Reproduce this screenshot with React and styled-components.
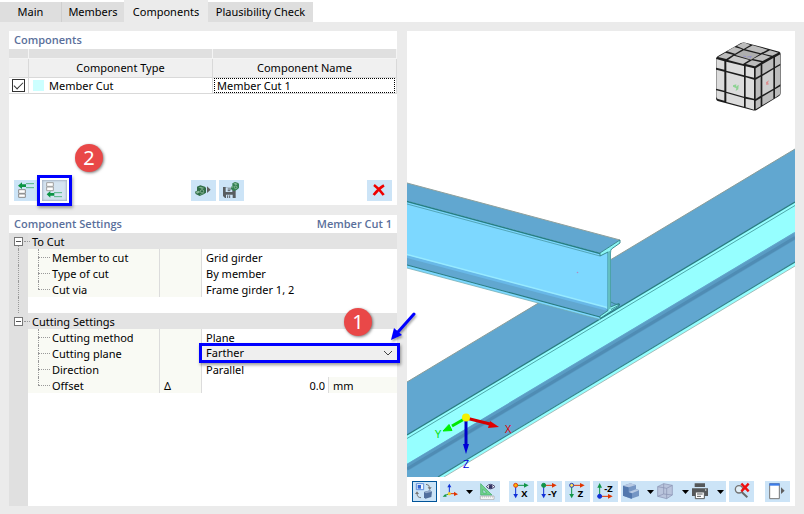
import React, { useState } from 'react';
import styled, { createGlobalStyle, css } from 'styled-components';

function App() {
    return (
        <>
            <GlobalStyle />
            <AppStyled>
                <TabBar />
                <Workspace>
                    <SideColumn>
                        <ComponentsPanel />
                        <SettingsPanel />
                    </SideColumn>
                    <ViewPanel />
                </Workspace>
            </AppStyled>
        </>
    );
}

function TabBar() {
    const [active, setActive] = useState('Components');
    const tabs = [
        { name: 'Main', width: 62 },
        { name: 'Members', width: 62 },
        { name: 'Components', width: 84 },
        { name: 'Plausibility Check', width: 105 },
    ];
    return (
        <Tabs role="tablist">
            {tabs.map((tab) => (
                <Tab
                    key={tab.name}
                    type="button"
                    role="tab"
                    $width={tab.width}
                    $active={tab.name === active}
                    aria-selected={tab.name === active}
                    onClick={() => setActive(tab.name)}
                >
                    {tab.name}
                </Tab>
            ))}
        </Tabs>
    );
}

function ComponentsPanel() {
    const [enabled, setEnabled] = useState(true);
    const [name, setName] = useState('Member Cut 1');
    return (
        <Panel $height={174}>
            <PanelTitle>Components</PanelTitle>
            <ComponentTable>
                <colgroup>
                    <col style={{ width: 20 }} />
                    <col />
                    <col />
                </colgroup>
                <thead>
                    <BandRow><td /><td /><td /></BandRow>
                    <HeadRow><th aria-label="Active" /><th>Component Type</th><th>Component Name</th></HeadRow>
                </thead>
                <tbody>
                    <BodyRow>
                        <td>
                            <CheckBox
                                type="checkbox"
                                aria-label="Member Cut active"
                                checked={enabled}
                                onChange={(e) => setEnabled(e.target.checked)}
                            />
                        </td>
                        <td><TypeCell><Swatch />Member Cut</TypeCell></td>
                        <td>
                            <NameInput aria-label="Component name" value={name} onChange={(e) => setName(e.target.value)} />
                        </td>
                    </BodyRow>
                </tbody>
            </ComponentTable>
            <ListTools>
                <ToolButton aria-label="Insert before"><InsertBeforeIcon /></ToolButton>
                <Marked>
                    <ToolButton $pressed aria-label="Insert after"><InsertAfterIcon /></ToolButton>
                    <MarkFrame />
                    <Badge $left={33} $top={-36}>2</Badge>
                </Marked>
                <Spacer />
                <ToolButton aria-label="Load component"><LibraryIcon /></ToolButton>
                <ToolButton aria-label="Save component"><SaveIcon /></ToolButton>
                <Spacer />
                <ToolButton aria-label="Delete"><DeleteIcon /></ToolButton>
            </ListTools>
        </Panel>
    );
}

function SettingsPanel() {
    const [plane, setPlane] = useState('Farther');
    const [offset, setOffset] = useState('0.0');
    return (
        <Panel $grow>
            <PanelTitle><span>Component Settings</span><span>Member Cut 1</span></PanelTitle>
            <SettingsBody>
                <SettingsTable>
                    <colgroup>
                        <col style={{ width: 19 }} />
                        <col style={{ width: 132 }} />
                        <col style={{ width: 42 }} />
                        <col />
                        <col style={{ width: 69 }} />
                    </colgroup>
                    <tbody>
                        <GroupRow title="To Cut" linked />
                        <Setting label="Member to cut" linked>Grid girder</Setting>
                        <Setting label="Type of cut" linked>By member</Setting>
                        <Setting label="Cut via" linked last>Frame girder 1, 2</Setting>
                        <tr><Gutter $linked /><td colSpan={4} /></tr>
                        <GroupRow title="Cutting Settings" />
                        <Setting label="Cutting method">Plane</Setting>
                        <Setting label="Cutting plane" htmlFor="plane">
                            <PlaneField>
                                <PlaneSelect id="plane" value={plane} onChange={(e) => setPlane(e.target.value)}>
                                    <option>Farther</option>
                                    <option>Closer</option>
                                </PlaneSelect>
                                <Chevron viewBox="0 0 10 6"><path d="M1 1l4 4 4-4" /></Chevron>
                                <Badge $left={142} $top={-37}>1</Badge>
                                <Pointer viewBox="0 0 30 32">
                                    <path d="M25 3L9 21" stroke="#0000ff" strokeWidth="3" strokeLinecap="round" />
                                    <path d="M2 29l3-12 8 7z" fill="#0000ff" />
                                </Pointer>
                            </PlaneField>
                        </Setting>
                        <Setting label="Direction">Parallel</Setting>
                        <tr>
                            <Gutter />
                            <NameCell $last><label htmlFor="offset">Offset</label></NameCell>
                            <SymbolCell>Δ</SymbolCell>
                            <ValueCell>
                                <OffsetInput id="offset" value={offset} onChange={(e) => setOffset(e.target.value)} />
                            </ValueCell>
                            <UnitCell>mm</UnitCell>
                        </tr>
                    </tbody>
                </SettingsTable>
            </SettingsBody>
        </Panel>
    );
}

function GroupRow({ title, linked }) {
    return (
        <tr>
            <Gutter $group $linked={linked}><Toggle type="button" aria-label={`Collapse ${title}`} /></Gutter>
            <GroupCell colSpan={4}>{title}</GroupCell>
        </tr>
    );
}

function Setting({ label, htmlFor, linked, last, children }) {
    return (
        <tr>
            <Gutter $linked={linked} />
            <NameCell $last={last}>{htmlFor ? <label htmlFor={htmlFor}>{label}</label> : label}</NameCell>
            <SymbolCell />
            <ValueCell colSpan={2}>{children}</ValueCell>
        </tr>
    );
}

function ViewPanel() {
    return (
        <View>
            <Scene />
            <NavCube />
            <ViewTools>
                <ToolButton $active aria-label="Switch view"><SwitchIcon /></ToolButton>
                <ToolGroup>
                    <SplitButton aria-label="Axes"><AxesIcon /><Caret /></SplitButton>
                    <ToolButton aria-label="Visibility"><RulerIcon /></ToolButton>
                </ToolGroup>
                <Divider />
                <ToolButton aria-label="View in X"><DirectionIcon dot="#ffb400" ring="#e03a1c" right="#119547" down="#1030d8" label="X" /></ToolButton>
                <ToolButton aria-label="View against Y"><DirectionIcon dot="#119547" ring="#119547" right="#e03400" down="#1030d8" label="-Y" /></ToolButton>
                <ToolButton aria-label="View in Z"><DirectionIcon dot="#ffe45c" ring="#2340b8" right="#e03400" down="#119547" label="Z" /></ToolButton>
                <ToolButton aria-label="View against Z"><DirectionIcon up dot="#1030d8" ring="#1030d8" right="#e03400" down="#119547" label="-Z" /></ToolButton>
                <ToolGroup>
                    <SplitButton aria-label="Solid display"><SolidIcon /><Caret /></SplitButton>
                    <SplitButton aria-label="Wireframe display"><WireIcon /><Caret /></SplitButton>
                    <SplitButton aria-label="Print"><PrintIcon /><Caret /></SplitButton>
                </ToolGroup>
                <ToolButton aria-label="Cancel zoom"><ZoomOffIcon /></ToolButton>
                <Spacer />
                <ToolButton aria-label="Show sidebar"><SidebarIcon /></ToolButton>
            </ViewTools>
        </View>
    );
}

function Scene() {
    return (
        <SceneSvg viewBox="407 31 388 446" preserveAspectRatio="xMidYMid slice" role="img" aria-label="Steel joint model">
            {/* frame girder */}
            <path d="M407 382L795 149V202L407 435z" fill="#61a7d0" />
            <path d="M407 382L795 149" stroke="#8a9c98" strokeWidth="1" />
            <path d="M407 435L795 202V233L407 465z" fill="#96ffff" />
            <path d="M407 464L795 232V262L438 477H407z" fill="#61a7d0" />
            <path d="M407 465.500L795 233.500" stroke="#63a6cc" strokeWidth="3" />
            <path d="M407 468L795 236.500" stroke="#5a9cc4" strokeWidth="6" />
            <path d="M407 469L795 237.500" stroke="#4f8cb4" strokeWidth="3" />
            <path d="M438 477L795 262V266L444 477z" fill="#96ffff" />
            <path d="M438 477L795 262" stroke="#307f86" strokeWidth="1.200" />
            <path d="M444 477L795 266" stroke="#9aaca8" strokeWidth=".8" />
            <path d="M407 435L795 202" stroke="#287b80" strokeWidth="1.300" />
            <path d="M407 438.500L795 205.500" stroke="#3e9296" strokeWidth=".8" />

            {/* grid girder */}
            <path d="M407 201L600 253 610 250V309L600 317 407 265z" fill="#7dd8ff" />
            <path d="M407 183L620 240 600 253 407 201z" fill="#61a7d0" />
            <path d="M407 183L620 240" stroke="#90a09c" strokeWidth="1" />
            <path d="M407 257L608 309.500 619 304 600 317 407 265z" fill="#61a7d0" />
            <path d="M407 256.500L606 309" stroke="#68b8e8" strokeWidth="3" />
            <path d="M407 254.500L607 307.500" stroke="#97eaff" strokeWidth="1.500" />
            <path d="M407 265L600 317V319.500L407 268z" fill="#7dd8ff" />
            <path d="M407 265L600 317" stroke="#287b80" strokeWidth="1.200" />
            <path d="M407 268L600 319.500" stroke="#6fa8ac" strokeWidth=".7" />
            <path d="M407 201.500L600 253.500" stroke="#267e84" strokeWidth="1.400" />
            <path d="M407 204L600 256" stroke="#4898a6" strokeWidth=".8" />
            <path d="M600 253L620 240V243L611.500 249Q610.500 250 610.500 253V307L619 303.500V306L600 318.500V316L608 310.500V252L600 256z" fill="#8cf6f4" stroke="#2c7f84" strokeWidth=".9" />
            <path d="M609.500 251V309" stroke="#65bfc0" strokeWidth="2" />
            <path d="M611 302l4 2 5 .5-9 5" fill="none" stroke="#2c7f84" strokeWidth=".8" />
            <circle cx="577.500" cy="272.500" r=".8" fill="#b28cc2" />

            {/* global axes */}
            <g strokeWidth="3" fill="none">
                <path d="M466 418l24 6" stroke="#d40000" />
                <path d="M466 418l-14 8" stroke="#00e800" />
                <path d="M466 420v25" stroke="#0000c8" />
            </g>
            <path d="M499 427l-9-6-2 7z" fill="#e00000" />
            <path d="M443 431l9-.5-3-6z" fill="#00f000" stroke="#00f000" />
            <path d="M466 454l-3-10h6z" fill="#0000d8" />
            <circle cx="466" cy="417.500" r="4" fill="#f4f000" />
            <AxisLabel x="508" y="433" fill="#e00000">X</AxisLabel>
            <AxisLabel x="438" y="438" fill="#00dc00">Y</AxisLabel>
            <AxisLabel x="466" y="468" fill="#0000e0">Z</AxisLabel>
        </SceneSvg>
    );
}

function NavCube() {
    return (
        <CubeSvg viewBox="44 34 204 213" aria-label="View cube">
            <path d="M55 80L125 40Q131 37 138 39L240 66Q244 68 244 74V190Q244 197 238 200L173 240Q167 244 160 242L55 214Q50 212 50 206V88Q50 83 55 80z" fill="#1c1c1c" />
            <g fill="#bdbdbd">
                <path d="M112 49l17-9q5-2 10 0l14 6-20 12z" />
                <path d="M160 47l45 13-21 11-46-12z" />
                <path d="M212 62l25 7-18 9-27-6z" />
                <path d="M83 65l22-13 24 7-22 13z" />
                <path d="M133 62l48 12-26 16-47-14z" fill="#aeaeae" />
                <path d="M188 74l26 7-24 13-29-6z" />
                <path d="M56 82l22-13 23 6-20 13z" />
                <path d="M104 78l46 13-19 12-45-12z" fill="#c9c9c9" />
                <path d="M158 92l28 6-19 12-28-7z" />
            </g>
            <g fill="#dcdcdc">
                <path d="M51 88l24 7v25l-24-6z" />
                <path d="M81 96l53 13v28l-53-14z" />
                <path d="M139 110l25 6v28l-25-6z" />
                <path d="M51 120l24 6v57l-24-6z" />
                <path d="M81 128l53 14v59l-53-15z" />
                <path d="M139 143l25 7v57l-25-6z" />
                <path d="M51 182l24 6v25l-19-5q-5-2-5-7z" />
                <path d="M81 190l53 15v26l-53-14z" />
                <path d="M139 207l25 5v28l-25-7z" />
            </g>
            <g fill="#bcbcbc">
                <path d="M169 116l15-9v29l-15 8z" />
                <path d="M189 104l33-19v29l-33 20z" />
                <path d="M227 83l16-9v28l-16 9z" />
                <path d="M169 150l15-9v57l-15 10z" />
                <path d="M189 139l33-20v58l-33 19z" fill="#cecece" />
                <path d="M227 116l16-9v57l-16 10z" />
                <path d="M169 214l15-9v25l-15 9z" />
                <path d="M189 201l33-19v25l-33 20z" />
                <path d="M227 179l16-9v20q0 4-4 6l-12 8z" />
            </g>
            <path d="M101 167l10-3-1 7 8-6-1 14-8 5 2-8-10-5z" fill="#8fd394" />
            <path d="M200 158l9-6-3 7 3 5-8 2z" fill="#dc8d8d" />
            <path d="M132 79l8 2m4 1l12-2-4 6" fill="none" stroke="#9693c9" strokeWidth="3" />
        </CubeSvg>
    );
}

const Glyph = ({ children }) => <IconSvg viewBox="0 0 75 63" aria-hidden="true">{children}</IconSvg>;

const InsertBeforeIcon = () => (
    <Glyph>
        <path d="M12 17l12-10v6h12v8H24v6z" fill="#0a9444" />
        <path d="M36 11h24M36 23h24" stroke="#53b484" strokeWidth="3" />
        <path d="M14 29h20v11H14zM14 42h20v10H14z" fill="#fff" stroke="#8b8b8b" strokeWidth="3" />
    </Glyph>
);

const InsertAfterIcon = () => (
    <Glyph>
        <path d="M14 8h20v11H14zM14 21h20v11H14z" fill="#fff" stroke="#a0a0a0" strokeWidth="3" />
        <path d="M14 43l11-10v6h12v8H25v6z" fill="#0a9444" />
        <path d="M36 38h24M36 50h24" stroke="#53b484" strokeWidth="3" />
    </Glyph>
);

const LibraryIcon = () => (
    <Glyph>
        <path d="M18 20l10-4 14 4 3 4v14l-7 5-12 5-12-6-2-7 6-3z" fill="#2f6d47" />
        <path d="M22 22l8-2 10 4-7 3z" fill="#7db18e" />
        <path d="M14 35l10-3 3 5-9 4z" fill="#8dbb9c" />
        <circle cx="33" cy="34" r="5" fill="#2f6d47" stroke="#a9cdb4" strokeWidth="2" />
        <path d="M27 44l12-5" stroke="#74a985" strokeWidth="2" />
        <path d="M48 19l11 10-11 10z" fill="#606060" />
    </Glyph>
);

const SaveIcon = () => (
    <Glyph>
        <path d="M12 21h30l8 8v25H18l-6-6z" fill="#585d60" />
        <path d="M20 22h20v14H20zM21 44h20v10H21z" fill="#cce4f7" />
        <path d="M26 27h10M26 32h8M26 46v8M32 46v8" stroke="#585d60" strokeWidth="3" />
        <path d="M40 10l8-4 10 3 2 4v11l-7 6-8 3-9-5v-7l4-3z" fill="#347f52" />
        <path d="M43 11l6-2 7 3-5 3z" fill="#8fc09f" />
        <circle cx="50" cy="22" r="4" fill="#347f52" stroke="#a9cdb4" strokeWidth="2" />
        <path d="M37 22l6-2" stroke="#91c1a0" strokeWidth="3" />
    </Glyph>
);

const DeleteIcon = () => (
    <Glyph><path d="M21 15Q35 25 50 45M51 16Q35 25 20 45" stroke="#ef0000" strokeWidth="8" fill="none" /></Glyph>
);

const SwitchIcon = () => (
    <Glyph>
        <path d="M13 8h22v18H13z" fill="#edf5ff" stroke="#4a7ed8" strokeWidth="2.500" />
        <path d="M17 12h10v11H17z" fill="#3264d0" />
        <path d="M42 10q11 0 11 12M27 50q-12 0-12-13" fill="none" stroke="#777" strokeWidth="3" />
        <path d="M47 19h12l-6 8zM9 39h12l-6-8z" fill="#777" />
        <path d="M36 33l18-5 6 4-2 16-18 5-4-4z" fill="#516f9d" />
        <path d="M36 33l18-5 6 4-18 5z" fill="#91a8c8" />
    </Glyph>
);

const AxesIcon = () => (
    <Glyph>
        <path d="M28 37V18" stroke="#1030d8" strokeWidth="3" />
        <path d="M22 19l6-11 6 11z" fill="#1030d8" />
        <path d="M28 38h17" stroke="#e03400" strokeWidth="3" />
        <path d="M42 32l12 8-12 5z" fill="#e03400" />
        <path d="M28 38l-12 5" stroke="#119547" strokeWidth="3" />
        <path d="M8 47l12 0-4-8z" fill="#119547" />
        <circle cx="28" cy="38" r="5" fill="#f1ce2e" />
    </Glyph>
);

const RulerIcon = () => (
    <Glyph>
        <path d="M17 8v34h34zM24 25l11 11H24z" fill="#72d28d" fillRule="evenodd" stroke="#3cac64" strokeWidth="2" />
        <path d="M16 45h41v10H16z" fill="#fff" stroke="#a2a2a2" strokeWidth="2" />
        <path d="M22 46v4M28 46v4M34 46v4M40 46v4M46 46v4M52 46v4" stroke="#999" strokeWidth="2" />
        <path d="M34 17q12-14 26 0-14 13-26 0z" fill="#fff" stroke="#454570" strokeWidth="3" />
        <circle cx="47" cy="17" r="6" fill="#343464" />
    </Glyph>
);

function DirectionIcon({ up, dot, ring, right, down, label }) {
    const y = up ? 46 : 13;
    return (
        <Glyph>
            <path d={`M20 ${y}h27`} stroke={right} strokeWidth="3" />
            <path d={`M45 ${y - 7}l14 7-14 7z`} fill={right} />
            <path d={up ? 'M20 46V18' : 'M20 13v28'} stroke={down} strokeWidth="3" />
            <path d={up ? 'M13 20l7-14 7 14z' : 'M13 39l7 13 7-13z'} fill={down} />
            <circle cx="20" cy={y} r="6" fill={dot} stroke={ring} strokeWidth="3" />
            <GlyphText x="46" y={up ? 33 : 49}>{label}</GlyphText>
        </Glyph>
    );
}

const SolidIcon = () => (
    <Glyph>
        <path d="M6 14l22-7 17 5v12l9 3v18l-24 8-24-9z" fill="#7596c4" />
        <path d="M6 14l17 5v14l10 4v16L6 44z" fill="#5277ad" />
        <path d="M6 14l22-7 17 5-22 7zM23 33l22-8 9 3-21 9z" fill="#b7c9e3" />
    </Glyph>
);

const WireIcon = () => (
    <Glyph>
        <path d="M5 17l18-9 26 5v29l-17 11-27-7z" fill="#b9c4dc" />
        <path d="M5 17l27 5v31L5 46zM5 17l18-9 26 5-17 9M49 13v29L32 53M23 8v31L5 46M23 39l26 3" fill="none" stroke="#8790b0" strokeWidth="2" />
    </Glyph>
);

const PrintIcon = () => (
    <Glyph>
        <path d="M11 7h31v11H11zM3 22h48v23H3z" fill="#55585a" />
        <path d="M13 33h27v20H13z" fill="#fff" stroke="#55585a" strokeWidth="3" />
        <path d="M18 39h17M18 46h12" stroke="#55585a" strokeWidth="3" />
        <path d="M42 27h4" stroke="#fff" strokeWidth="3" />
    </Glyph>
);

const ZoomOffIcon = () => (
    <Glyph>
        <circle cx="30" cy="25" r="11" fill="#e4f0f8" stroke="#737373" strokeWidth="4" />
        <path d="M38 33l17 16" stroke="#686868" strokeWidth="6" />
        <path d="M37 8l22 23M59 8L37 31" stroke="#ee1010" strokeWidth="7" />
    </Glyph>
);

const SidebarIcon = () => (
    <Glyph>
        <path d="M14 8h29v45H14z" fill="#fff" stroke="#777" strokeWidth="3" />
        <path d="M13 7h31v7H13z" fill="#3d7dea" />
        <path d="M48 19l11 10-11 10z" fill="#606060" />
    </Glyph>
);

const Caret = () => <CaretSvg viewBox="0 0 7 4"><path d="M0 0h7L3.500 4z" /></CaretSvg>;

const GlobalStyle = createGlobalStyle`
    *{
        box-sizing: border-box;
    }
    body{
        margin: 0;
        background: #ebebeb;
        color: #000;
        font: 11px/16px "Noto Sans", "Open Sans", sans-serif;
    }
    button, input, select{
        margin: 0;
        padding: 0;
        border: 0;
        border-radius: 0;
        background: none;
        color: inherit;
        font: inherit;
    }
`;

const AppStyled = styled.div`
    display: flex;
    flex-direction: column;
    min-height: 100vh;
`;

const Tabs = styled.div`
    display: flex;
    align-items: flex-end;
    height: 22px;
    background: #fff;
`;

const Tab = styled.button`
    width: ${(p) => p.$width}px;
    height: ${(p) => (p.$active ? 22 : 20)}px;
    padding-top: ${(p) => (p.$active ? 4 : 2)}px;
    padding-bottom: 2px;
    background: ${(p) => (p.$active ? '#ebebeb' : '#dedede')};
    white-space: nowrap;
    &:first-child{
        border-right: 1px solid #cfcfcf;
    }
`;

const Workspace = styled.main`
    flex: 1;
    display: grid;
    grid-template-columns: minmax(0, 1fr) minmax(0, 1fr);
    gap: 10px;
    padding: 9px 9px 8px;
`;

const SideColumn = styled.div`
    display: flex;
    flex-direction: column;
    gap: 10px;
`;

const Panel = styled.section`
    display: flex;
    flex-direction: column;
    background: #fff;
    ${(p) => (p.$grow ? css`flex: 1;` : css`min-height: ${p.$height}px;`)}
`;

const PanelTitle = styled.h2`
    display: flex;
    justify-content: space-between;
    height: 18px;
    margin: 0;
    padding: 0 5px;
    color: #5a6f9b;
    font-family: "Open Sans", "Noto Sans", sans-serif;
    font-size: 11px;
    font-weight: 600;
    line-height: 18px;
`;

const ComponentTable = styled.table`
    width: 100%;
    table-layout: fixed;
    border-collapse: separate;
    border-spacing: 0;
    td, th{
        padding: 0;
        border-right: 1px solid #d9d9d9;
    }
`;

const BandRow = styled.tr`
    height: 10px;
    td{
        background: #e0e0e0;
        border-right-color: #f4f4f4;
        border-bottom: 1px solid #f4f4f4;
    }
`;

const HeadRow = styled.tr`
    height: 19px;
    background: #f0f0f0;
    th{
        border-bottom: 1px solid #d9d9d9;
        font-weight: 400;
    }
`;

const BodyRow = styled.tr`
    height: 16px;
    td{
        height: 16px;
        border-bottom: 1px solid #d9d9d9;
        line-height: 14px;
        vertical-align: middle;
    }
`;

const CheckBox = styled.input`
    appearance: none;
    display: block;
    width: 13px;
    height: 13px;
    margin-left: 3px;
    border: 1px solid #333;
    background: #fff;
    &:checked::before{
        content: '';
        display: block;
        width: 8px;
        height: 4px;
        margin: 2px 1px;
        border: solid #333;
        border-width: 0 0 1px 1px;
        transform: rotate(-45deg);
    }
`;

const TypeCell = styled.div`
    display: flex;
    align-items: center;
    gap: 5px;
    padding-left: 4px;
`;

const Swatch = styled.span`
    width: 11px;
    height: 11px;
    background: #ccffff;
`;

const NameInput = styled.input`
    display: block;
    width: calc(100% - 2px);
    height: 15px;
    margin-left: 1px;
    padding: 0 2px;
    border: 1px dotted #000;
`;

const ListTools = styled.div`
    display: flex;
    gap: 3px;
    margin-top: auto;
    padding: 0 5px 4px;
`;

const Spacer = styled.span`
    flex: 1;
`;

const ToolButton = styled.button`
    flex: none;
    width: 25px;
    height: 21px;
    background: #cce4f7;
    ${(p) => p.$pressed && css`
        background: #d5e4f1;
        box-shadow: inset 0 0 2px 1px #a8b6c8;
    `}
    ${(p) => p.$active && css`
        box-shadow: inset 0 0 0 1px #005499;
    `}
`;

const IconSvg = styled.svg`
    display: block;
    flex: none;
    width: 25px;
    height: 21px;
`;

const GlyphText = styled.text`
    font: 700 28px "Open Sans", sans-serif;
    text-anchor: middle;
`;

const Marked = styled.div`
    position: relative;
    display: flex;
    flex: none;
`;

/* annotation frames lie over the control they point at */
const MarkFrame = styled.span`
    position: absolute;
    inset: -5px;
    border: 3px solid #0000ff;
    box-shadow: 1px 2px 3px rgba(0, 0, 0, .35);
    pointer-events: none;
`;

const Badge = styled.span`
    position: absolute;
    z-index: 2;
    left: ${(p) => p.$left}px;
    top: ${(p) => p.$top}px;
    width: 28px;
    height: 28px;
    border-radius: 50%;
    background: #e94848;
    box-shadow: 1px 1px 3px rgba(0, 0, 0, .5);
    color: #fff;
    font-size: 20px;
    line-height: 27px;
    text-align: center;
    pointer-events: none;
`;

const SettingsBody = styled.div`
    flex: 1;
    background: linear-gradient(to right, #e0e0e0 19px, #fff 19px);
`;

const SettingsTable = styled.table`
    width: 100%;
    table-layout: fixed;
    border-collapse: separate;
    border-spacing: 0;
    tr{
        height: 16px;
    }
    td{
        height: 16px;
        padding: 2px 0 0;
        line-height: 14px;
        white-space: nowrap;
    }
`;

const Gutter = styled.td`
    position: relative;
    background: #e0e0e0;
    &&{
        padding: 0;
    }
    ${(p) => p.$linked && css`
        &::before{
            content: '';
            position: absolute;
            left: 9px;
            top: ${p.$group ? 13 : 0}px;
            bottom: 0;
            border-left: 1px dotted #999;
        }
    `}
    ${(p) => p.$group && css`
        &::after{
            content: '';
            position: absolute;
            left: 15px;
            right: -2px;
            top: 8px;
            border-top: 1px dotted #999;
        }
    `}
`;

const Toggle = styled.button`
    display: block;
    width: 9px;
    height: 9px;
    margin-left: 5px;
    border: 1px solid #777;
    background: linear-gradient(#555, #555) center / 5px 1px no-repeat #fff;
`;

const GroupCell = styled.td`
    background: #e3e3e3;
    &&{
        padding-left: 4px;
    }
`;

const NameCell = styled.td`
    position: relative;
    background: #f9faf4;
    border-right: 1px solid #dcdcdc;
    &&{
        padding-left: 24px;
    }
    &::before{
        content: '';
        position: absolute;
        left: 10px;
        top: 0;
        bottom: ${(p) => (p.$last ? 8 : 0)}px;
        border-left: 1px dotted #999;
    }
    &::after{
        content: '';
        position: absolute;
        left: 10px;
        top: 8px;
        width: 12px;
        border-top: 1px dotted #999;
    }
`;

const SymbolCell = styled.td`
    background: #f9faf4;
    border-right: 1px solid #dcdcdc;
    &&{
        padding-left: 4px;
    }
`;

const ValueCell = styled.td`
    &&{
        padding-left: 4px;
    }
`;

const UnitCell = styled.td`
    background: #f9faf4;
    border-left: 1px solid #dcdcdc;
    &&{
        padding-left: 4px;
    }
`;

const OffsetInput = styled.input`
    display: block;
    width: 100%;
    height: 14px;
    padding-right: 3px;
    text-align: right;
`;

const PlaneField = styled.div`
    position: relative;
    height: 16px;
    margin: -2px 0 0 -4px;
    &::after{
        content: '';
        position: absolute;
        inset: -2px -3px;
        border: 3px solid #0000ff;
        box-shadow: 1px 2px 3px rgba(0, 0, 0, .4);
        pointer-events: none;
    }
`;

const PlaneSelect = styled.select`
    appearance: none;
    display: block;
    width: 100%;
    height: 16px;
    padding-left: 4px;
    background: #efefef;
`;

const Chevron = styled.svg`
    position: absolute;
    right: 4px;
    top: 5px;
    width: 10px;
    height: 6px;
    fill: none;
    stroke: #444;
    pointer-events: none;
`;

const Pointer = styled.svg`
    position: absolute;
    z-index: 2;
    right: -22px;
    top: -34px;
    width: 30px;
    height: 32px;
    filter: drop-shadow(1px 2px 1px rgba(0, 0, 0, .35));
    pointer-events: none;
`;

const View = styled.section`
    position: relative;
    display: flex;
    flex-direction: column;
    background: #fff;
`;

const SceneSvg = styled.svg`
    flex: 1;
    display: block;
    width: 100%;
    min-height: 0;
`;

const AxisLabel = styled.text`
    font: 10px "Liberation Sans", sans-serif;
    text-anchor: middle;
`;

const CubeSvg = styled.svg`
    position: absolute;
    right: 13px;
    top: 10px;
    width: 68px;
    height: 71px;
`;

const ViewTools = styled.div`
    display: flex;
    gap: 3px;
    padding: 4px 5px;
`;

const ToolGroup = styled.div`
    display: flex;
    flex: none;
    background: #cce4f7;
`;

const SplitButton = styled.button`
    display: flex;
    align-items: center;
    gap: 1px;
    width: 35px;
    height: 21px;
`;

const Divider = styled.span`
    width: 3px;
`;

const CaretSvg = styled.svg`
    flex: none;
    width: 7px;
    height: 4px;
`;

export default App;
